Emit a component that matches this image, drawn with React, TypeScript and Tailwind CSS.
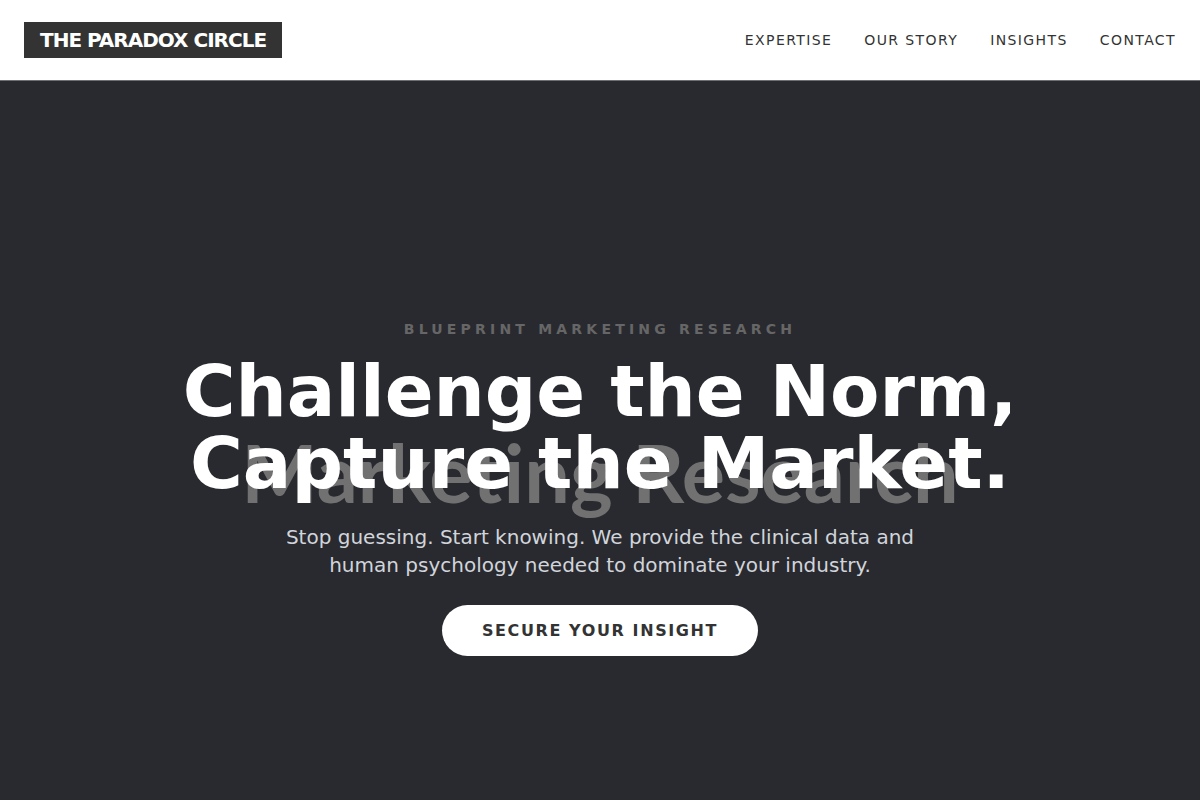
const navLinks = [
  { label: 'Expertise', href: '#expertise' },
  { label: 'Our Story', href: '#story' },
  { label: 'Insights', href: '#insights' },
  { label: 'Contact', href: '#contact' },
]

const Header = () => {
  return (
    <header className="border-b border-[#6b7072] bg-white">
      <nav className="flex h-20 items-center justify-between px-6">
        <a
          href="#home"
          className="bg-[#333333] px-4 py-1 text-xl font-bold tracking-tighter text-white uppercase"
        >
          The Paradox Circle
        </a>
        <div className="flex gap-8 text-sm tracking-widest text-[#333333] uppercase">
          {navLinks.map((link) => (
            <a key={link.href} href={link.href}>
              {link.label}
            </a>
          ))}
        </div>
      </nav>
    </header>
  )
}

const Hero = () => {
  return (
    <section
      id="home"
      className="relative flex min-h-screen items-center justify-center overflow-hidden bg-[#292a2f]"
    >
      {/* backdrop lettering behind the headline */}
      <div
        aria-hidden="true"
        className="absolute inset-0 flex items-center justify-center pb-5 font-[Lato,sans-serif] text-[81px] leading-none font-bold whitespace-nowrap text-[#717171]"
      >
        Marketing Research
      </div>
      <div className="relative max-w-4xl px-6 text-center">
        <p className="mb-4 text-sm font-bold tracking-[0.3em] text-[#666666] uppercase">
          Blueprint Marketing Research
        </p>
        <h1 className="mb-6 text-7xl leading-none font-bold text-white">
          Challenge the Norm,
          <br />
          Capture the Market.
        </h1>
        <p className="mx-auto mb-10 max-w-2xl text-xl text-[#d1d5db]">
          Stop guessing. Start knowing. We provide the clinical data and human psychology needed to
          dominate your industry.
        </p>
        <a
          href="#contact"
          className="rounded-full bg-white px-10 py-4 font-bold tracking-widest text-[#333333] uppercase"
        >
          Secure Your Insight
        </a>
      </div>
    </section>
  )
}

const App = () => {
  return (
    <div className="font-['DejaVu_Sans',sans-serif]">
      <Header />
      <main>
        <Hero />
      </main>
    </div>
  )
}

export default App
